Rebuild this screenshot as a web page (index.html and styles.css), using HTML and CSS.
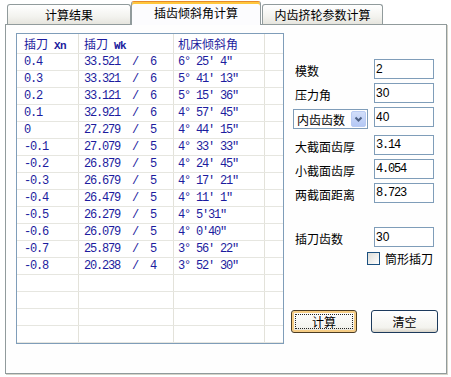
FILE: index.html
```html
<!DOCTYPE html>
<html lang="zh-CN">
<head>
    <meta charset="UTF-8">
    <title>插齿倾斜角计算</title>
    <link rel="stylesheet" href="styles.css">
</head>
<body>
    <div class="window">
        <!-- 选项卡 -->
        <div class="tabs">
            <div class="tab tab-1">计算结果</div>
            <div class="tab tab-2 active">插齿倾斜角计算</div>
            <div class="tab tab-3">内齿挤轮参数计算</div>
        </div>

        <div class="panel">
            <!-- 结果列表 -->
            <div class="list">
                <div class="row head">
                    <div class="cell c1">插刀<span class="num latin"> Xn</span></div>
                    <div class="cell c2">插刀<span class="num latin"> Wk</span></div>
                    <div class="cell c3">机床倾斜角</div>
                    <div class="cell c4"></div>
                </div>
                <div class="row"><div class="cell c1 num">0.4</div><div class="cell c2 num">33.521  /  6</div><div class="cell c3 num">6° 25′ 4″</div><div class="cell c4"></div></div>
                <div class="row"><div class="cell c1 num">0.3</div><div class="cell c2 num">33.321  /  6</div><div class="cell c3 num">5° 41′ 13″</div><div class="cell c4"></div></div>
                <div class="row"><div class="cell c1 num">0.2</div><div class="cell c2 num">33.121  /  6</div><div class="cell c3 num">5° 15′ 36″</div><div class="cell c4"></div></div>
                <div class="row"><div class="cell c1 num">0.1</div><div class="cell c2 num">32.921  /  6</div><div class="cell c3 num">4° 57′ 45″</div><div class="cell c4"></div></div>
                <div class="row"><div class="cell c1 num">0</div><div class="cell c2 num">27.279  /  5</div><div class="cell c3 num">4° 44′ 15″</div><div class="cell c4"></div></div>
                <div class="row"><div class="cell c1 num">-0.1</div><div class="cell c2 num">27.079  /  5</div><div class="cell c3 num">4° 33′ 33″</div><div class="cell c4"></div></div>
                <div class="row"><div class="cell c1 num">-0.2</div><div class="cell c2 num">26.879  /  5</div><div class="cell c3 num">4° 24′ 45″</div><div class="cell c4"></div></div>
                <div class="row"><div class="cell c1 num">-0.3</div><div class="cell c2 num">26.679  /  5</div><div class="cell c3 num">4° 17′ 21″</div><div class="cell c4"></div></div>
                <div class="row"><div class="cell c1 num">-0.4</div><div class="cell c2 num">26.479  /  5</div><div class="cell c3 num">4° 11′ 1″</div><div class="cell c4"></div></div>
                <div class="row"><div class="cell c1 num">-0.5</div><div class="cell c2 num">26.279  /  5</div><div class="cell c3 num">4° 5′31″</div><div class="cell c4"></div></div>
                <div class="row"><div class="cell c1 num">-0.6</div><div class="cell c2 num">26.079  /  5</div><div class="cell c3 num">4° 0′40″</div><div class="cell c4"></div></div>
                <div class="row"><div class="cell c1 num">-0.7</div><div class="cell c2 num">25.879  /  5</div><div class="cell c3 num">3° 56′ 22″</div><div class="cell c4"></div></div>
                <div class="row"><div class="cell c1 num">-0.8</div><div class="cell c2 num">20.238  /  4</div><div class="cell c3 num">3° 52′ 30″</div><div class="cell c4"></div></div>
                <div class="row"><div class="cell c1"></div><div class="cell c2"></div><div class="cell c3"></div><div class="cell c4"></div></div>
                <div class="row"><div class="cell c1"></div><div class="cell c2"></div><div class="cell c3"></div><div class="cell c4"></div></div>
                <div class="row"><div class="cell c1"></div><div class="cell c2"></div><div class="cell c3"></div><div class="cell c4"></div></div>
                <div class="row"><div class="cell c1"></div><div class="cell c2"></div><div class="cell c3"></div><div class="cell c4"></div></div>
            </div>

            <!-- 参数输入 -->
            <div class="form">
                <div class="field">
                    <label>模数</label>
                    <input type="text" class="sans" value="2">
                </div>
                <div class="field">
                    <label>压力角</label>
                    <input type="text" class="sans" value="30">
                </div>
                <div class="field combo-row">
                    <div class="combo">
                        <span>内齿齿数</span>
                        <span class="combo-btn">
                            <svg width="13" height="14" viewBox="0 0 13 14"><path d="M3.5 5.5 L6.5 8.5 L9.5 5.5" fill="none" stroke="#4d6185" stroke-width="2"/></svg>
                        </span>
                    </div>
                    <input type="text" class="sans" value="40">
                </div>
                <div class="field group">
                    <label>大截面齿厚</label>
                    <input type="text" class="num" value="3.14">
                </div>
                <div class="field">
                    <label>小截面齿厚</label>
                    <input type="text" class="num" value="4.054">
                </div>
                <div class="field">
                    <label>两截面距离</label>
                    <input type="text" class="num" value="8.723">
                </div>
                <div class="field cutter">
                    <label>插刀齿数</label>
                    <input type="text" class="sans" value="30">
                </div>
                <div class="check-row">
                    <span class="checkbox"></span>
                    <span>筒形插刀</span>
                </div>
                <div class="buttons">
                    <button class="btn default"><span class="focus">计算</span></button>
                    <button class="btn clear">清空</button>
                </div>
            </div>
        </div>
    </div>
</body>
</html>
```
FILE: styles.css
```css
body {
    margin: 0;
    background: #fff;
    font-family: "Noto Sans CJK SC", sans-serif;
    font-size: 12px;
    color: #000;
}

.window {
    width: 451px;
    height: 377px;
    overflow: hidden;
}

/* 选项卡 */
.tabs {
    display: flex;
    align-items: flex-end;
    height: 24px;
    padding-left: 7px;
    position: relative;
    z-index: 1;
}

.tab {
    box-sizing: border-box;
    height: 20px;
    border: 1px solid #919b9c;
    border-bottom: none;
    border-radius: 3px 3px 0 0;
    background: linear-gradient(#fff, #f3f3ef 60%, #e6e5de);
    text-align: center;
    line-height: 19px;
}

.tab-1 {
    width: 124px;
}

.tab-3 {
    width: 121px;
    margin-left: 1px;
}

.tab.active {
    width: 130px;
    height: 24px;
    margin-bottom: -1px;
    background: #fcfcfe;
    border-top: 1px solid #e68b2c;
    box-shadow: inset 0 2px 0 #ffc73c;
    line-height: 22px;
}

/* 面板 */
.panel {
    box-sizing: border-box;
    width: 442px;
    height: 350px;
    margin-left: 5px;
    padding: 8px 0 0 10px;
    border: 1px solid #919b9c;
    box-shadow: 1px 1px 0 #d5d3c8;
    background: #fefefe;
    display: flex;
}

/* 列表 */
.list {
    box-sizing: border-box;
    width: 268px;
    height: 311px;
    border: 1px solid #7f9db9;
    background: #fff;
    overflow: hidden;
    flex-shrink: 0;
}

.row {
    box-sizing: border-box;
    display: grid;
    grid-template-columns: 62px 95px 91px 18px;
    height: 17px;
    border-bottom: 1px solid #e6e6e0;
}

.row.head {
    height: 20px;
}

.cell {
    border-right: 1px solid #e3e2da;
    white-space: pre;
    overflow: hidden;
    line-height: 16px;
    color: #1c1c9e;
}

.head .cell {
    line-height: 19px;
}

.c1 {
    padding-left: 7px;
}

.c2 {
    padding-left: 5px;
}

.c3 {
    padding-left: 4px;
}

.c4 {
    border-right: none;
}

.num {
    font-family: "Liberation Mono", monospace;
    font-size: 12px;
    letter-spacing: -1.2px;
}

.latin {
    font-weight: bold;
    font-size: 11px;
    letter-spacing: -0.6px;
}

/* 参数输入 */
.form {
    margin-left: 9px;
    padding-top: 26px;
    width: 146px;
}

.field {
    display: flex;
    align-items: center;
    height: 20px;
    margin-bottom: 4px;
}

.field label {
    box-sizing: border-box;
    width: 81px;
    padding-left: 2px;
    padding-top: 2px;
}

.field input {
    box-sizing: border-box;
    width: 60px;
    height: 20px;
    margin: 0;
    padding: 0 1px;
    border: 1px solid #7f9db9;
    background: #fff;
    color: #000;
    outline: none;
}

.field input.sans {
    font-family: "Liberation Sans", sans-serif;
    font-size: 12px;
}

.group {
    margin-top: 8px;
}

.cutter {
    margin-top: 24px;
}

.combo-row {
    align-items: flex-start;
}

.combo {
    box-sizing: border-box;
    width: 75px;
    height: 20px;
    margin-top: 2px;
    margin-right: 6px;
    padding: 1px 1px 1px 3px;
    border: 1px solid #7f9db9;
    background: #fff;
    display: flex;
    align-items: center;
    justify-content: space-between;
}

.combo-btn {
    box-sizing: border-box;
    width: 15px;
    height: 16px;
    border: 1px solid #b9cbf3;
    border-radius: 2px;
    background: linear-gradient(#d2def9, #b4c8f5);
    display: flex;
    align-items: center;
    justify-content: center;
}

.check-row {
    display: flex;
    align-items: center;
    justify-content: flex-end;
    height: 14px;
    margin-top: 2px;
    padding-right: 6px;
}

.checkbox {
    box-sizing: border-box;
    width: 13px;
    height: 13px;
    margin-right: 5px;
    border: 1px solid #1c5180;
    background: linear-gradient(135deg, #dcdcd7, #fff);
}

.buttons {
    display: flex;
    gap: 14px;
    margin-top: 45px;
    margin-left: -2px;
}

.btn {
    box-sizing: border-box;
    width: 66px;
    height: 23px;
    padding: 0;
    border: 1px solid #003c74;
    border-radius: 3px;
    background: linear-gradient(#fff, #f3f3ee 80%, #d8d3c8);
    font-family: "Noto Sans CJK SC", sans-serif;
    font-size: 12px;
    color: #000;
    display: flex;
    align-items: center;
    justify-content: center;
}

.btn.default {
    border-color: #4b3c24;
    box-shadow: inset 0 0 0 2px #f6cd85;
}

.btn.clear {
    width: 67px;
    border-color: #1c3a5c;
}

.focus {
    flex: 1;
    align-self: stretch;
    margin: 3px;
    border: 1px dotted #222;
    display: flex;
    align-items: center;
    justify-content: center;
}
```
